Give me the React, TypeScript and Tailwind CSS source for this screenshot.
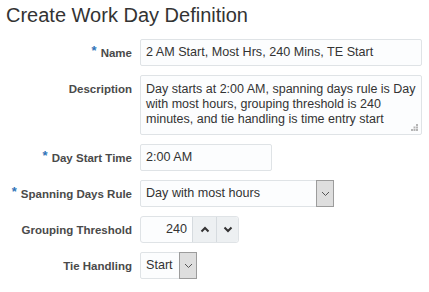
import React from 'react'

const font = { fontFamily: '"Liberation Sans", Arial, sans-serif' }

function Label({ text, required, top }: { text: string; required?: boolean; top?: boolean }) {
  return (
    <div className={`flex justify-end ${top ? 'items-start pt-[7px]' : 'items-center'} pr-[8px]`}>
      {required && <span className="text-[13px] text-[#2f74b8] font-bold mr-[4px] self-start mt-[5px] leading-none">*</span>}
      <span className="text-[11.5px] font-bold text-[#4a4a4a] leading-[14px]">{text}</span>
    </div>
  )
}

function Chevron() {
  return (
    <svg width="9" height="6" viewBox="0 0 9 6">
      <path d="M1 1 L4.5 4.5 L8 1" fill="none" stroke="#555" strokeWidth="1" />
    </svg>
  )
}

function SelectBox({ value, width }: { value: string; width: string }) {
  return (
    <div className={`flex h-[27px] ${width} border border-[#dfe3e6] rounded-[2px] bg-[#fcfdfe]`}>
      <div className="flex-1 flex items-center pl-[5px] text-[12.6px] text-[#333]">{value}</div>
      <div className="w-[18px] -my-px -mr-px flex items-center justify-center bg-[#dedede] border border-[#9c9c9c]">
        <Chevron />
      </div>
    </div>
  )
}

export default function App() {
  return (
    <div style={font} className="w-[429px] h-[292px] bg-white overflow-hidden">
      <h1 className="pl-[6px] pt-[3px] text-[20px] leading-[24px] text-[#333]">Create Work Day Definition</h1>

      <div className="grid grid-cols-[140px_auto] gap-y-[9px] mt-[12px]">
        <Label text="Name" required />
        <div className="h-[27px] w-[282px] border border-[#dfe3e6] rounded-[2px] bg-[#fcfdfe] flex items-center pl-[5px] text-[12.6px] text-[#333]">
          2 AM Start, Most Hrs, 240 Mins, TE Start
        </div>

        <Label text="Description" top />
        <div className="relative h-[60px] w-[282px] border border-[#dfe3e6] rounded-[2px] bg-[#fcfdfe] pl-[5px] pt-[6px] text-[12.5px] leading-[15px] text-[#333]">
          Day starts at 2:00 AM, spanning days rule is Day with most hours, grouping threshold is 240 minutes, and tie handling is time entry start
          <svg width="7" height="7" viewBox="0 0 7 7" className="absolute right-[3px] bottom-[3px]">
            <rect x="5" y="0" width="2" height="2" fill="#b5b5b5" />
            <rect x="2.5" y="2.5" width="2" height="2" fill="#b5b5b5" />
            <rect x="5" y="2.5" width="2" height="2" fill="#b5b5b5" />
            <rect x="0" y="5" width="2" height="2" fill="#b5b5b5" />
            <rect x="2.5" y="5" width="2" height="2" fill="#b5b5b5" />
            <rect x="5" y="5" width="2" height="2" fill="#b5b5b5" />
          </svg>
        </div>

        <Label text="Day Start Time" required />
        <div className="h-[27px] w-[132px] border border-[#dfe3e6] rounded-[2px] bg-[#fcfdfe] flex items-center pl-[5px] text-[12.6px] text-[#333]">
          2:00 AM
        </div>

        <Label text="Spanning Days Rule" required />
        <SelectBox value="Day with most hours" width="w-[194px]" />

        <Label text="Grouping Threshold" />
        <div className="flex h-[27px] w-[99px] border border-[#dfe3e6] rounded-[3px] bg-[#fcfdfe]">
          <div className="w-[51px] flex items-center justify-end pr-[5px] text-[12.6px] text-[#333]">240</div>
          <div className="w-[24px] flex items-center justify-center bg-[#edf0f2] border-l border-[#d6dbdf]">
            <svg width="10" height="7" viewBox="0 0 10 7">
              <path d="M1.5 5.5 L5 2 L8.5 5.5" fill="none" stroke="#333" strokeWidth="2" />
            </svg>
          </div>
          <div className="flex-1 flex items-center justify-center bg-[#edf0f2] border-l border-[#d6dbdf] rounded-r-[3px]">
            <svg width="10" height="7" viewBox="0 0 10 7">
              <path d="M1.5 1.5 L5 5 L8.5 1.5" fill="none" stroke="#333" strokeWidth="2" />
            </svg>
          </div>
        </div>

        <Label text="Tie Handling" />
        <SelectBox value="Start" width="w-[57px]" />
      </div>
    </div>
  )
}
